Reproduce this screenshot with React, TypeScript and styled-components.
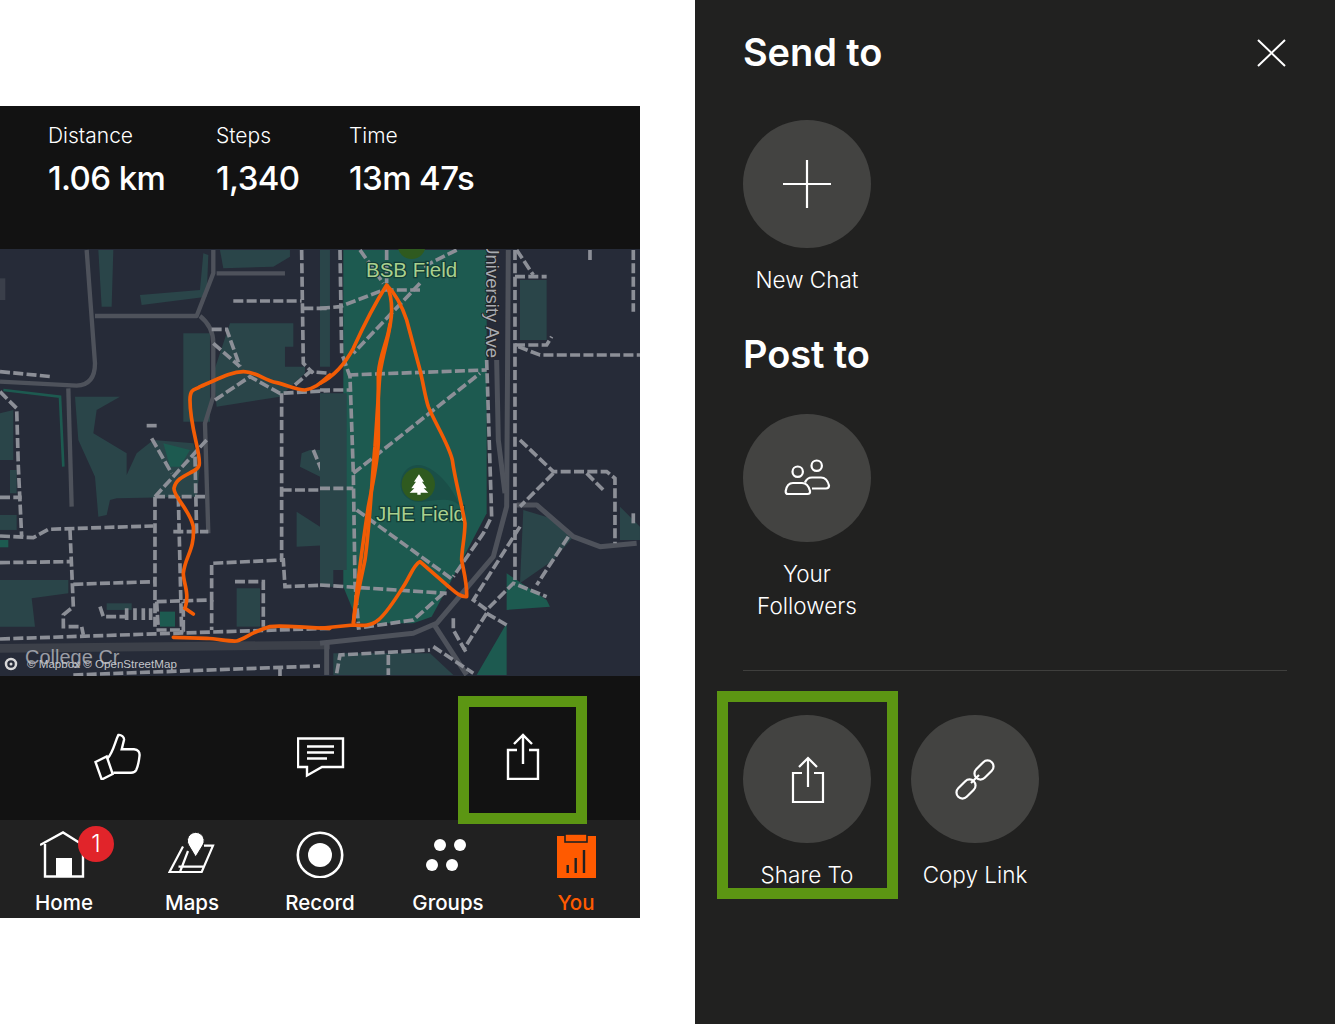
import styled, { createGlobalStyle } from "styled-components";

const GlobalStyle = createGlobalStyle`
  html, body {
    margin: 0;
    padding: 0;
    background: #fff;
    font-family: Inter, "Liberation Sans", sans-serif;
  }
`;

// all map paths are in 3x crop units, the groups scale them back down
const leftGreens = [
  "M295 30H340L335 200H305Z",
  "M420 165L600 150L610 40L625 45L620 170L425 195Z",
  "M660 30H870V50L820 80L670 85Z",
  "M550 280H630V545H550Z",
  "M690 250H880V320H855V380H915V400L840 470L650 500L640 400Z",
  "M960 30H990V380H960Z",
  "M225 470L360 470L290 510L280 580L380 640L380 705L410 640L460 600L580 610L600 680L590 770L350 775L330 780L320 825L295 830L285 710L235 600Z",
  "M0 520L40 510V660H0Z",
  "M30 690H50V760H30Z",
  "M880 580H990V630H930L905 640L900 680L980 720V580Z",
  "M890 815L960 860L990 880V915L890 920Z",
  "M0 1020H205V1060L95 1075L105 1160H0Z",
  "M710 1045H780V1160H710Z",
  "M320 1090H395V1110H320Z",
  "M0 825H50V870H0Z",
];

const leftBright = [
  "M490 610L570 630L540 680L510 680Z",
  "M480 1115H525V1160H480Z",
  "M0 900H25V922H0Z",
];

const leftRoads = [
  "M260 30L285 370Q285 435 230 437L0 425",
  "M285 228H590L640 100V30",
  "M650 100H855",
  "M600 228Q640 260 640 310V470L615 550L625 880",
  "M205 445L215 800",
];

const leftDashes = [
  "M0 395L155 410",
  "M0 455L50 505L55 680L65 890",
  "M0 772H65",
  "M0 888L100 893L145 868L460 858",
  "M465 770V1170",
  "M0 968L215 965",
  "M210 870L220 1100L190 1125V1160H245L250 1185",
  "M220 1033L465 1025",
  "M0 1197L520 1180L990 1165",
  "M465 770H620",
  "M465 770L620 600",
  "M455 595L515 700",
  "M535 770L545 1180",
  "M585 650L590 880",
  "M520 875H625",
  "M470 1085L635 1080V970L850 960L855 1040L990 1035",
  "M635 1080V1170",
  "M470 1085L475 1170H550V1085",
  "M845 460V960",
  "M845 750H990",
  "M940 630L985 740L970 850",
  "M645 480L750 410L840 460L990 452",
  "M635 268H680L720 380",
  "M640 310L720 380",
  "M700 183H905",
  "M905 30L910 370L940 400",
  "M910 205H990",
  "M885 435L930 395L990 400",
  "M300 1100L310 1130H380",
  "M705 1025H790V1160",
  "M440 557H470",
  "M220 1305L960 1278",
  "M840 1280V1310",
];

const rightGreens = [
  "M0 460H80V990H40V1040H0Z",
  "M600 120H680V300H600Z",
  "M610 810L710 840L760 890L700 960L600 1030Z",
  "M40 1240H330L400 1305H40Z",
  "M900 800L960 860V900H900Z",
];

const rightRoads = [
  "M0 1210L280 1180L350 1150L520 950L560 800L565 30",
  "M530 360L535 600L555 760",
  "M340 1150L440 1305",
  "M590 795H650L760 890L840 920L950 910",
  "M20 1210V1305",
];

const rightDashes = [
  "M60 30L65 340L90 410L100 700L105 1030L115 1150",
  "M0 205L60 200L190 150H300",
  "M300 130L100 340",
  "M85 405L500 390",
  "M120 30L190 130",
  "M200 30V130",
  "M410 30L310 80",
  "M0 450H90",
  "M100 700L480 400",
  "M0 745H100",
  "M110 810L400 1020",
  "M0 1035L380 1060",
  "M370 1060L280 1140L110 1165",
  "M500 360L515 830L490 880L400 1010",
  "M585 30V1030",
  "M585 110H680",
  "M590 30L640 105",
  "M595 320L660 345H960",
  "M585 315H680L695 290",
  "M600 600L700 695H860L885 715V910",
  "M700 700L600 800",
  "M800 700L850 750",
  "M600 860L460 1080L500 1110L580 1030L680 1070",
  "M500 1120L430 1230",
  "M400 1135V1170L440 1240",
  "M500 1120L560 1155",
  "M745 890L650 1035",
  "M940 30V215",
  "M810 30V65",
  "M940 820V860",
  "M50 1300L60 1245L330 1230",
  "M205 1245V1305",
  "M340 1220L460 1300",
];

const leftRoute =
  "M580 1122L555 1105C570 1060 550 1030 550 1000C555 950 585 930 580 860C570 810 520 770 522 745C530 700 600 700 598 670C600 630 570 560 570 480C570 440 590 450 600 440C650 420 690 395 730 395C770 395 790 420 830 428C860 435 890 450 915 450C950 445 970 420 990 405";
const leftRouteBottom =
  "M520 1192L620 1195C660 1198 690 1205 710 1203C735 1198 755 1175 810 1160C850 1155 900 1163 990 1165";
const rightRoute =
  "M0 430C40 410 70 380 100 325C125 270 165 190 200 135C225 160 245 195 260 240L300 390C310 430 315 470 325 500C345 550 385 610 397 660C405 720 425 790 435 850C435 890 425 930 425 960C430 990 442 1030 440 1070C420 1072 405 1055 380 1035L300 965C280 975 270 1010 250 1040C225 1080 200 1120 175 1140C155 1158 130 1158 100 1155L0 1165";
const rightRouteLoops = [
  "M100 1155C105 1090 125 1010 135 960C150 850 155 720 165 620C170 550 175 460 180 400C190 330 215 270 215 210C215 180 210 155 200 135",
  "M100 1150C110 1050 130 900 145 800C160 720 175 660 175 600V400C180 340 205 300 210 250",
];

const tabs = [
  { label: "Home", icon: <HomeIcon /> },
  { label: "Maps", icon: <MapsIcon /> },
  { label: "Record", icon: <RecordIcon /> },
  { label: "Groups", icon: <GroupsIcon /> },
  { label: "You", icon: <YouIcon />, active: true },
];

function ShareIcon() {
  return (
    <Glyph viewBox="0 0 48 48">
      <path d="M18 18H9V47H39V18H30" />
      <path d="M24 32V4M15 12L24 3L33 12" />
    </Glyph>
  );
}

function ThumbIcon() {
  return (
    <Glyph viewBox="0 0 48 48">
      <path d="M1.5 30L12.7 24.5L18.7 42L7.7 47.5Z" />
      <path d="M13.5 26.5C19 21 21 10 24.3 3C27 2.5 30.5 5 30 8L27.7 17.3H40C44 17.5 46 20 45.5 24C45 29 44 34 42.2 38C41 40.5 39.5 40.7 37 40.7H19.3" />
    </Glyph>
  );
}

function CommentIcon() {
  return (
    <Glyph viewBox="0 0 48 48">
      <path d="M1 6.5H46V35H25L10 43.5V35H1Z" />
      <path d="M10 14.5H37M10 20.5H37M10 26.5H30" />
    </Glyph>
  );
}

function HomeIcon() {
  return (
    <TabSvg viewBox="0 0 48 48">
      <path d="M0 15L23 2.5L43 15" fill="none" stroke="#fff" strokeWidth="2.4" />
      <path d="M5 14V46.5H43V14" fill="none" stroke="#fff" strokeWidth="2.4" />
      <rect x="16" y="28" width="16" height="19" fill="#fff" />
    </TabSvg>
  );
}

function MapsIcon() {
  return (
    <TabSvg viewBox="0 0 48 48">
      <path
        d="M15 16.5L1.5 42H33.7L45 15.7H36M12 42L20 21M10.5 36.7H35.5"
        fill="none"
        stroke="#fff"
        strokeWidth="2.2"
      />
      <path
        d="M27.7 27L20.5 15A8.4 8.4 0 1 1 35 15Z"
        fill="#fff"
        stroke="#212121"
        strokeWidth="1"
      />
    </TabSvg>
  );
}

function RecordIcon() {
  return (
    <TabSvg viewBox="0 0 48 48">
      <circle cx="24" cy="25" r="22.2" fill="none" stroke="#fff" strokeWidth="2.6" />
      <circle cx="24" cy="25" r="12" fill="#fff" />
    </TabSvg>
  );
}

function GroupsIcon() {
  return (
    <TabSvg viewBox="0 0 48 48">
      <circle cx="16" cy="15" r="6" fill="#fff" />
      <circle cx="36" cy="15" r="6" fill="#fff" />
      <circle cx="8" cy="35" r="6" fill="#fff" />
      <circle cx="28" cy="35" r="6" fill="#fff" />
    </TabSvg>
  );
}

function YouIcon() {
  return (
    <TabSvg viewBox="0 0 48 48">
      <rect x="5" y="6" width="39" height="42" fill="#ff5a00" />
      <rect x="13" y="4" width="22" height="8" fill="#ff5a00" stroke="#212121" strokeWidth="1.6" />
      <path d="M15.7 43V35M23.7 43V28M32 43V20" stroke="#212121" strokeWidth="2.4" />
    </TabSvg>
  );
}

function MapPicture() {
  return (
    <MapSvg viewBox="0 0 640 427">
      <rect width="640" height="427" fill="#262b38" />
      <g transform="scale(0.3333) translate(0 -27)">
        {leftGreens.map((d) => (
          <path key={d} d={d} fill="#2a4549" />
        ))}
        {leftBright.map((d) => (
          <path key={d} d={d} fill="#1d5a50" />
        ))}
        <path d="M10 450L180 470L190 680" fill="none" stroke="#1d5a50" strokeWidth="8" />
        <path d="M0 115H16V180H0Z" fill="#3a3f4a" />
        <path d="M0 1225L990 1215" fill="none" stroke="#3c4049" strokeWidth="26" />
        <g fill="none" stroke="#4e525b" strokeWidth="13" strokeLinejoin="round">
          {leftRoads.map((d) => (
            <path key={d} d={d} />
          ))}
        </g>
        <g fill="none" stroke="#8c8f97" strokeWidth="11" strokeDasharray="30 10">
          {leftDashes.map((d) => (
            <path key={d} d={d} />
          ))}
          <path d="M380 1105V1140M405 1105V1140M430 1105V1140M452 1105V1140" strokeDasharray="none" />
        </g>
      </g>
      <g transform="translate(320 0) scale(0.3333) translate(0 -27)">
        <path
          d="M70 30H500V820L400 1010L335 1130L280 1150L115 1150L70 1040Z"
          fill="#1d5a50"
        />
        {rightGreens.map((d) => (
          <path key={d} d={d} fill="#2a4549" />
        ))}
        <path d="M560 1000L680 1080L690 1100L560 1110V1305H470L560 1150Z" fill="#1d5a50" />
        <circle cx="275" cy="15" r="42" fill="#2f5a1f" />
        <path
          d="M295 675C260 675 240 705 242 740C245 770 275 790 310 785C350 780 400 770 420 800C400 740 340 675 295 675Z"
          fill="#1a4f48"
        />
        <circle cx="295" cy="733" r="50" fill="#2f5a1f" />
        <path
          d="M297 703L312 725H306L320 745H311L325 758H302V764H292V758H269L283 745H274L288 725H282Z"
          fill="#fff"
        />
        <g fill="none" stroke="#4e525b" strokeWidth="15" strokeLinejoin="round">
          {rightRoads.map((d) => (
            <path key={d} d={d} />
          ))}
        </g>
        <g fill="none" stroke="#8c8f97" strokeWidth="11" strokeDasharray="30 10">
          {rightDashes.map((d) => (
            <path key={d} d={d} />
          ))}
        </g>
      </g>
      <PlaceLabel x="366" y="28">BSB Field</PlaceLabel>
      <PlaceLabel x="376" y="272">JHE Field</PlaceLabel>
      <StreetLabel transform="translate(486 0) rotate(90)" x="109" y="0" textAnchor="end">University Ave</StreetLabel>
      <g transform="translate(320 0) scale(0.3333) translate(0 -27)" fill="none" stroke="#f25c05" strokeWidth="11" strokeLinejoin="round">
        {rightRouteLoops.map((d) => (
          <path key={d} d={d} />
        ))}
        <path d={rightRoute} />
      </g>
      <g transform="scale(0.3333) translate(0 -27)" fill="none" stroke="#f25c05" strokeWidth="11" strokeLinecap="round">
        <path d={leftRoute} />
        <path d={leftRouteBottom} />
      </g>
      <CollegeLabel x="25" y="415">College Cr</CollegeLabel>
      <circle cx="11" cy="415" r="5" fill="none" stroke="#d8d8d8" strokeWidth="2.5" />
      <circle cx="11" cy="415" r="1.5" fill="#d8d8d8" />
      <Attribution x="27" y="419">© Mapbox © OpenStreetMap</Attribution>
    </MapSvg>
  );
}

export default function App() {
  return (
    <Page>
      <GlobalStyle />
      <Phone>
        <Stats>
          <Stat>
            <StatLabel>Distance</StatLabel>
            <StatValue>1.06 km</StatValue>
          </Stat>
          <Stat>
            <StatLabel>Steps</StatLabel>
            <StatValue>1,340</StatValue>
          </Stat>
          <Stat>
            <StatLabel>Time</StatLabel>
            <StatValue>13m 47s</StatValue>
          </Stat>
        </Stats>
        <MapPicture />
        <ActionBar>
          <ThumbIcon />
          <CommentIcon />
          <ShareSlot>
            <ShareIcon />
            <PhoneHighlight />
          </ShareSlot>
        </ActionBar>
        <TabBar>
          {tabs.map((tab) => (
            <Tab key={tab.label} $active={tab.active}>
              {tab.icon}
              {tab.label}
              {tab.label === "Home" && <Badge>1</Badge>}
            </Tab>
          ))}
        </TabBar>
      </Phone>
      <Panel>
        <PanelHeader>
          <Heading>Send to</Heading>
          <CloseIcon viewBox="0 0 30 30">
            <path d="M2 2L29 28M29 2L2 28" />
          </CloseIcon>
        </PanelHeader>
        <Option>
          <Circle>
            <PanelGlyph viewBox="0 0 48 48">
              <path d="M24 0V48M0 24H48" />
            </PanelGlyph>
          </Circle>
          <OptionLabel>New Chat</OptionLabel>
        </Option>
        <SecondHeading>Post to</SecondHeading>
        <Option>
          <Circle>
            <PanelGlyph viewBox="0 0 48 48">
              <circle cx="14.7" cy="17.7" r="5.2" />
              <circle cx="33.7" cy="11.7" r="5.2" />
              <path d="M5 40H24.5Q27.5 40 27 37Q25 29 19 29H10Q4 29 2.7 37Q2.5 40 5 40Z" />
              <path d="M29 34.5H43Q46 34.5 46 31.5Q44 23.5 38 23.5H29Q24 23.5 22 28.5" />
            </PanelGlyph>
          </Circle>
          <OptionLabel>
            Your
            <br />
            Followers
          </OptionLabel>
        </Option>
        <Divider />
        <OptionRow>
          <Option>
            <Circle>
              <PanelGlyph viewBox="0 0 48 48">
                <path d="M19 18H10V47H40V18H31" />
                <path d="M25 32V4M16 12L25 3L34 12" />
              </PanelGlyph>
            </Circle>
            <OptionLabel>Share To</OptionLabel>
            <PanelHighlight />
          </Option>
          <Option>
            <Circle>
              <PanelGlyph viewBox="0 0 48 48">
                <rect x="22" y="9" width="22" height="12" rx="6" transform="rotate(-45 33 15)" />
                <rect x="4" y="28" width="22" height="12" rx="6" transform="rotate(-45 15 34)" />
                <path d="M20 28L28 20" />
              </PanelGlyph>
            </Circle>
            <OptionLabel>Copy Link</OptionLabel>
          </Option>
        </OptionRow>
      </Panel>
    </Page>
  );
}

const Page = styled.div`
  display: flex;
  justify-content: space-between;
  width: 1335px;
  height: 1024px;
  overflow: hidden;
`;

const Phone = styled.div`
  width: 640px;
  padding-top: 106px;
`;

const Stats = styled.div`
  display: grid;
  grid-template-columns: 168px 133px auto;
  height: 143px;
  box-sizing: border-box;
  padding: 16px 0 0 48px;
  background: #121212;
  color: #fff;
`;

const Stat = styled.div`
  display: flex;
  flex-direction: column;
  gap: 8px;
`;

const StatLabel = styled.div`
  font-size: 21px;
  font-weight: 300;
  line-height: 28px;
`;

const StatValue = styled.div`
  font-size: 33px;
  font-weight: 500;
  line-height: 40px;
  letter-spacing: -0.6px;
`;

const MapSvg = styled.svg`
  display: block;
  width: 640px;
  height: 427px;
`;

const PlaceLabel = styled.text`
  font-family: "Liberation Sans", sans-serif;
  font-size: 20.5px;
  fill: #a9d08e;
  stroke: #123d36;
  stroke-width: 2.5px;
  paint-order: stroke;
`;

const StreetLabel = styled.text`
  font-family: "Liberation Sans", sans-serif;
  font-size: 18.5px;
  fill: #a8abb2;
  stroke: #222;
  stroke-width: 1.5px;
  paint-order: stroke;
`;

const CollegeLabel = styled.text`
  font-family: "Liberation Sans", sans-serif;
  font-size: 20px;
  fill: #9a9da5;
`;

const Attribution = styled.text`
  font-family: "Liberation Sans", sans-serif;
  font-size: 11.6px;
  fill: #c4c6ca;
`;

const ActionBar = styled.div`
  display: flex;
  gap: 154.5px;
  height: 144px;
  box-sizing: border-box;
  padding: 56px 0 0 94px;
  background: #121212;
`;

const Glyph = styled.svg`
  display: block;
  width: 48px;
  height: 48px;
  fill: none;
  stroke: #fff;
  stroke-width: 2.4;
`;

const ShareSlot = styled.div`
  position: relative;
  width: 48px;
  height: 48px;
`;

const PhoneHighlight = styled.div`
  position: absolute;
  left: -41px;
  top: -36px;
  width: 129px;
  height: 128px;
  box-sizing: border-box;
  border: 11px solid #5c9613;
  z-index: 1;
`;

const TabBar = styled.div`
  display: grid;
  grid-template-columns: repeat(5, 1fr);
  height: 98px;
  background: #212121;
`;

const Tab = styled.div<{ $active?: boolean }>`
  position: relative;
  display: flex;
  flex-direction: column;
  align-items: center;
  gap: 13px;
  padding-top: 10px;
  font-size: 20.5px;
  font-weight: 500;
  line-height: 24px;
  color: ${({ $active }) => ($active ? "#ff5a00" : "#fff")};
`;

const TabSvg = styled.svg`
  display: block;
  width: 48px;
  height: 48px;
  flex: none;
`;

const Badge = styled.div`
  position: absolute;
  left: 78px;
  top: 6px;
  width: 36px;
  height: 36px;
  border-radius: 50%;
  background: #e1242a;
  color: #fff;
  font-size: 24px;
  font-weight: 300;
  line-height: 36px;
  text-align: center;
`;

const Panel = styled.div`
  width: 640px;
  height: 1024px;
  box-sizing: border-box;
  padding: 30px 48px 0;
  background: #212120;
  color: #fff;
`;

const PanelHeader = styled.div`
  display: flex;
  justify-content: space-between;
  align-items: center;
  margin-bottom: 46px;
`;

const Heading = styled.div`
  font-size: 38px;
  font-weight: 600;
  line-height: 44px;
  letter-spacing: -0.1px;
`;

const SecondHeading = styled(Heading)`
  margin: 36px 0 38px;
`;

const CloseIcon = styled.svg`
  width: 30px;
  height: 30px;
  margin: 2px 1px 0 0;
  fill: none;
  stroke: #fff;
  stroke-width: 2;
`;

const Option = styled.div`
  position: relative;
  display: flex;
  flex-direction: column;
  align-items: center;
  gap: 16px;
  width: 128px;
`;

const Circle = styled.div`
  display: flex;
  align-items: center;
  justify-content: center;
  width: 128px;
  height: 128px;
  border-radius: 50%;
  background: #434341;
`;

const PanelGlyph = styled.svg`
  display: block;
  width: 48px;
  height: 48px;
  fill: none;
  stroke: #fff;
  stroke-width: 2.2;
`;

const OptionLabel = styled.div`
  font-size: 22.5px;
  font-weight: 300;
  line-height: 32px;
  text-align: center;
  white-space: nowrap;
`;

const Divider = styled.div`
  height: 1px;
  margin: 48px 0 44px;
  background: #3f3f3d;
`;

const OptionRow = styled.div`
  display: flex;
  gap: 40px;
`;

const PanelHighlight = styled.div`
  position: absolute;
  left: -26px;
  top: -24px;
  width: 181px;
  height: 208px;
  box-sizing: border-box;
  border: 11px solid #5c9613;
`;
